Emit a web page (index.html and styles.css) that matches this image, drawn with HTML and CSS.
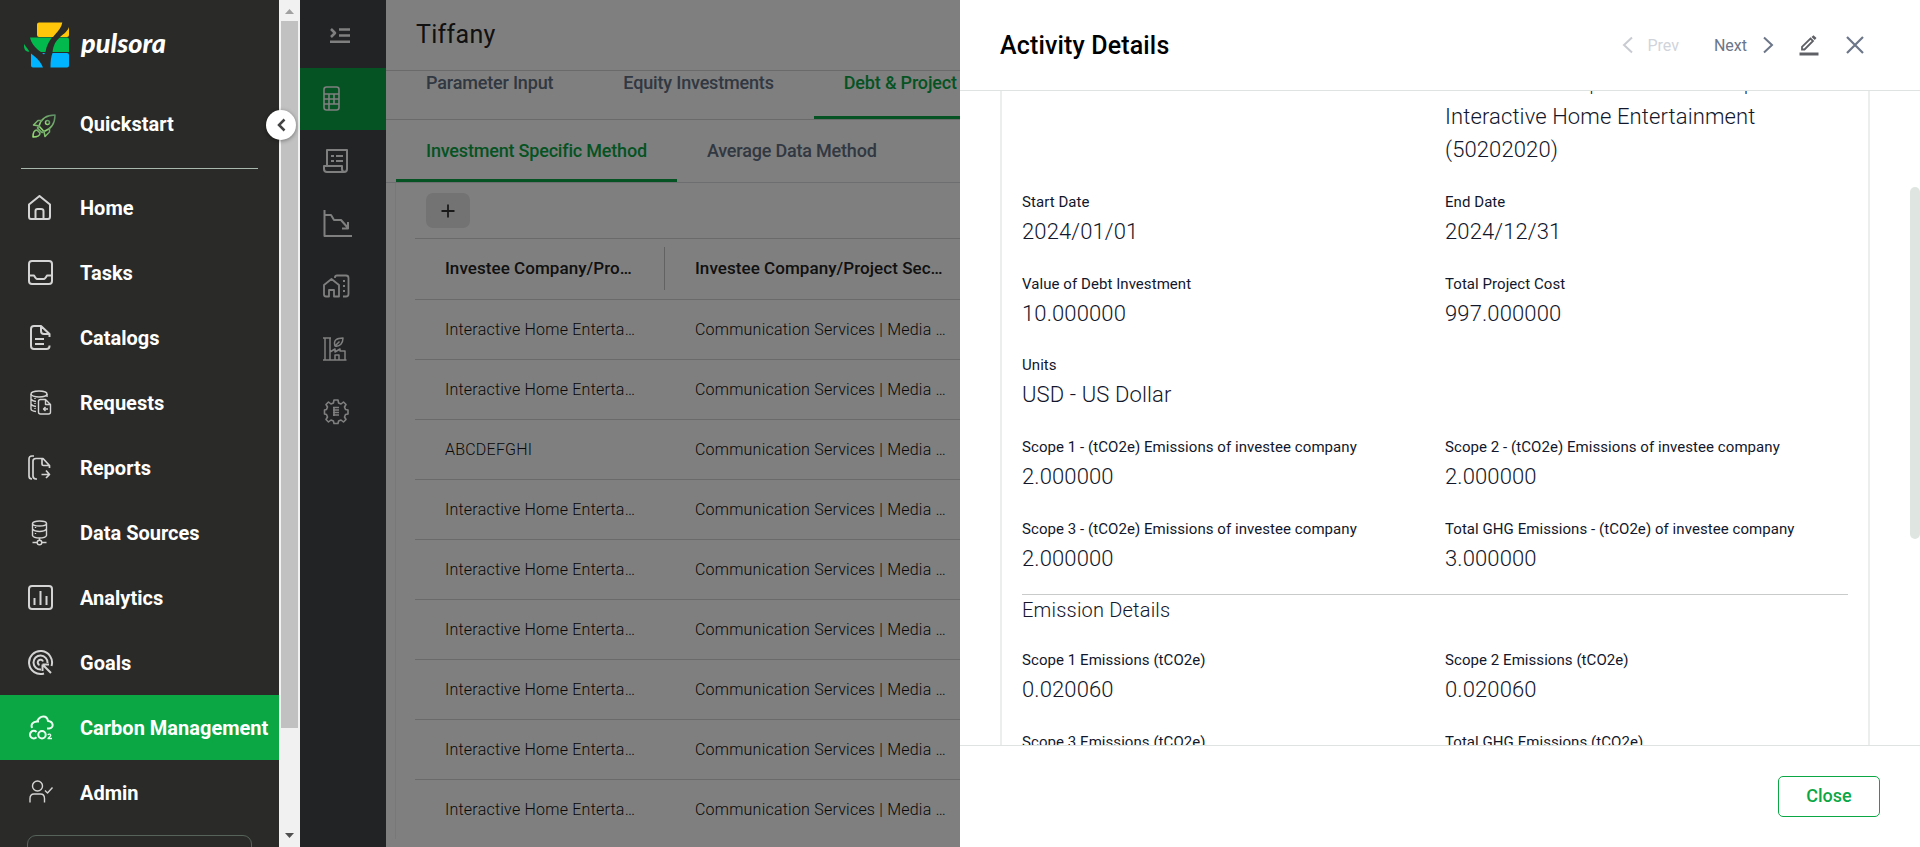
FILE: index.html
```html
<!DOCTYPE html>
<html lang="en">
<head>
<meta charset="utf-8">
<title>Pulsora - Activity Details</title>
<link rel="stylesheet" href="styles.css">
</head>
<body>
<div class="app">
  <nav class="sidebar">
    <div class="brand">
      <svg class="logo" width="46" height="46" viewBox="0 0 46 46">
        <path fill="#ffc60a" d="M15 0.500H38.300C37.500 5 35 8 31.500 12L29 15H15Q13 15 13 13V2.500Q13 .5 15 .5Z"/>
        <path fill="#ffc60a" d="M45 5V13Q45 15 43 15H36C41 11 43.500 9 45 5Z"/>
        <path fill="#02b94e" d="M6 15.500H28C24.500 20 22.500 24 21.500 30H17C12 27 7 21 6 15.500Z"/>
        <path fill="#02b94e" d="M36 15.500H43Q45 15.500 45 17.500V30H28.500C29.500 23 31.500 19 36 15.500Z"/>
        <path fill="#02b94e" d="M0 22L5.500 29.500Q1 30.500 0 25Z"/>
        <path fill="#00b4ff" d="M7 31.500C12 35 17 40 19 45.500H9Q7 45.500 7 43.500ZM18 31H21L20 32.500ZM28.500 31H43Q45 31 45 33V43.500Q45 45.500 43 45.500H26.500C26.500 39 27 35 28.500 31Z"/>
      </svg>
      <span class="wordmark">pulsora</span>
    </div>
    <a class="item quick">
      <svg class="rocket" width="24" height="24" viewBox="0 0 24 24" fill="none" stroke="url(#rg)" stroke-width="1.500" stroke-linejoin="round" stroke-linecap="round">
        <defs><linearGradient id="rg" x1="1" y1="0" x2="0" y2="1"><stop offset="0" stop-color="#5c8a66"/><stop offset="1" stop-color="#9ae673"/></linearGradient></defs>
        <path d="M7 12C9 5 15 1 23 1C23 9 19 15 12 17.500Z"/><path d="M10 6.500L6 6.500L1.500 11L7.500 12M17.500 14V18L13 22.500L12 17"/><circle cx="15.500" cy="8.500" r="2"/><path d="M7 12L5.500 14L10 18.500L12 17.500M5 16C2 16 1 19 1 23C5 23 8 22 8 19Z"/>
      </svg>
      <span>Quickstart</span>
    </a>
    <div class="rule"></div>
    <div class="items">
      <a class="item"><svg width="27" height="27" viewBox="0 0 27 27"><path d="M1 9.500L11.500 1L22 9.500V21.500Q22 24 20 24H3Q1 24 1 21.500ZM7.500 24V16Q7.500 14 9.500 14H13Q15.500 14 15.500 16V24"/></svg><span>Home</span></a>
      <a class="item"><svg width="27" height="27" viewBox="0 0 27 27"><rect x="1" y="1" width="23" height="23" rx="3"/><path d="M1 15.500H6Q8 19 9 19H16Q17 19 19 15.500H24"/></svg><span>Tasks</span></a>
      <a class="item"><svg width="27" height="27" viewBox="0 0 27 27"><path d="M21.500 20.500V21Q21.500 24 18.500 24H6Q3 24 3 21V4Q3 1 6 1H13L21.500 9V12M13 1V6Q13 9 16 9H21.500M7 14H16M7 19H16"/></svg><span>Catalogs</span></a>
      <a class="item"><svg class="thin" width="27" height="27" viewBox="0 0 27 27"><ellipse cx="11" cy="4" rx="8" ry="3"/><path d="M3 4V19Q3 21 8 21.500M19 4V7M3 9Q4 11 8 11.500M3 14Q4 16 8 16.500M7 8V9M7 13V14M7 18V19"/><path d="M12 9.500H17.500L22.500 14.500V22Q22.500 24 20.500 24H12.500Q10.500 24 10.500 22V11.500Q10.500 9.500 12.500 9.500M17.500 10V14.500H22M20 19H15.500M17.500 17L15.500 19L17.500 21"/></svg><span>Requests</span></a>
      <a class="item"><svg class="mid" width="27" height="27" viewBox="0 0 27 27"><path d="M6 1H4Q1 1 1 4V21Q1 24 4 24M9 24H8Q5 24 5 21V6Q5 3.500 8 3.500H15L21.500 10.500V13M14 4V9Q14 10.500 15.500 10.500H21.500M13.500 19.500H21.500M18 15.500L21.500 19.500L18 23"/></svg><span>Reports</span></a>
      <a class="item"><svg class="thin" width="27" height="27" viewBox="0 0 27 27"><ellipse cx="11.500" cy="3.500" rx="7" ry="2.500"/><path d="M4.500 3.500V15.500Q5.500 18 11.500 18T18.500 15.500V3.500M4.500 9Q6.500 11.500 11.500 11.500T18.500 9M11.500 18V20M4.500 22.500H9M14 22.500H18.500M7.500 7V8M7.500 13V14"/><circle cx="11.500" cy="22.500" r="2.300"/></svg><span>Data Sources</span></a>
      <a class="item"><svg width="27" height="27" viewBox="0 0 27 27"><rect x="1" y="1" width="23" height="23" rx="3"/><path d="M6.500 13V20M12.500 6V20M18.500 11V20"/></svg><span>Analytics</span></a>
      <a class="item"><svg width="27" height="27" viewBox="0 0 27 27"><path d="M16 23.500A11.500 11.500 0 1 1 23.500 16M13 19.500A7 7 0 1 1 19.500 13M11.500 15A2.700 2.700 0 1 1 15 11.500M14.500 14.500H21M14.500 14.500V21M15 15L23 23"/></svg><span>Goals</span></a>
      <a class="item active"><svg width="27" height="27" viewBox="0 0 27 27"><path d="M4 13C2.500 9 5 7 9 6.500C12 0 19 0 20 6C25.500 6.500 26.500 13 21 13.500H19M9 6.500H11"/><path d="M8.500 17A3.800 3.800 0 1 0 8.500 22.300"/><circle cx="14" cy="19.700" r="3.700"/><path class="sub" d="M19.800 20Q20.500 18.800 22 19.200Q23.500 20 22 21.500L20 23.500H24"/></svg><span>Carbon Management</span></a>
      <a class="item"><svg class="thin" width="27" height="27" viewBox="0 0 27 27"><circle cx="9.500" cy="6" r="5"/><path d="M2 22.500V18.500Q2 14 6 14H12.500Q16.500 14 16.500 18.500V22.500M17 10.500L19.500 13L24.500 7.500"/></svg><span>Admin</span></a>
    </div>
    <div class="footbox"></div>
  </nav>

  <div class="scroller">
    <svg width="21" height="21" viewBox="0 0 21 21"><path fill="#a0a0a0" d="M6 14L10.500 9L15 14Z"/></svg>
    <div class="thumb"></div>
    <svg class="down" width="21" height="21" viewBox="0 0 21 21"><path fill="#505050" d="M6 7L10.500 12L15 7Z"/></svg>
    <div class="collapse"><svg width="30" height="30" viewBox="0 0 30 30"><path fill="none" stroke="#444" stroke-width="2.500" d="M18.500 9.500L13 15L18.500 20.500"/></svg></div>
  </div>

  <div class="stage">
    <aside class="rail">
      <div class="cell first"><svg width="22" height="18" viewBox="0 0 22 18"><path d="M1 2L5 6L1 10M9 2.500H20M9 8.500H20M0 14.700H20" stroke-width="2.500"/></svg></div>
      <div class="cell on"><svg width="30" height="28" viewBox="0 0 30 28"><rect x="1" y="2" width="15" height="23" rx="2.500"/><path d="M1 9H16M1 14H16M1 19H16M6 9V25M11 9V19"/></svg></div>
      <div class="cell"><svg width="30" height="28" viewBox="0 0 30 28" stroke-width="2"><path d="M4 18V3H24V22Q24 25 21 25H4Q1 25 1 22V19H19V22Q19 25 22 25M8 9H11M13 9H20M8 14H11M13 14H20"/></svg></div>
      <div class="cell"><svg width="30" height="28" viewBox="0 0 30 28" stroke-width="2"><path d="M1.500 0V26H29M2 5H8L11 10H18L25 18M25 12V18.500H19"/></svg></div>
      <div class="cell"><svg width="30" height="28" viewBox="0 0 30 28" stroke-width="1.800"><path d="M1 13L8.500 7L16 13V24.500H11V18H6V24.500H3Q1 24.500 1 22.500ZM12 6V5Q12 3.500 14 3.500H23Q25.500 3.500 25.500 6V22Q25.500 24.500 23 24.500H20M20 9H22M20 14H22M20 19H22"/></svg></div>
      <div class="cell"><svg width="30" height="28" viewBox="0 0 30 28" stroke-width="1.500"><path d="M0 25H23.500M0 3H8M2 3V25M7 3V25M7 17L12 14V17L17 14V16H22V25M12 25V20H16V25M12 11C10 5 14 3 20 3C20 8 17 12 12 11L16.500 6.500"/></svg></div>
      <div class="cell"><svg width="30" height="28" viewBox="0 0 30 28" stroke-width="1.600"><path d="M11 2H15L15.600 5L18 6L20.500 4L23 6.500L21.500 9L22.500 11.500L25 12V16L22.500 16.500L21.500 19L23 21.500L20.500 24L18 22L15.600 23L15 25.500H11L10.400 23L8 22L5.500 24L3 21.500L4.500 19L3.500 16.500L1.500 16V12L3.500 11.500L4.500 9L3 6.500L5.500 4L8 6L10.400 5Z"/><path d="M10 9.500H16M10 12H16M10 14.500H16M10 17H16M11 10V18"/></svg></div>
    </aside>
    <main class="main">
      <header class="title">Tiffany</header>
      <div class="tabs top">
        <span class="tab">Parameter Input</span><span class="tab">Equity Investments</span><span class="tab sel">Debt &amp; Project Finance</span>
      </div>
      <div class="tabs second">
        <span class="tab sel">Investment Specific Method</span><span class="tab">Average Data Method</span>
      </div>
      <section class="card">
        <div class="toolbar"><button class="add"><svg width="14" height="14" viewBox="0 0 14 14"><path d="M7 .5V13.500M.5 7H13.500" stroke="#333" stroke-width="1.800"/></svg></button></div>
        <div class="table">
          <div class="row head"><span>Investee Company/Pro…</span><i></i><span>Investee Company/Project Sec…</span></div>
          <div class="row"><span>Interactive Home Enterta…</span><span>Communication Services | Media …</span></div>
          <div class="row"><span>Interactive Home Enterta…</span><span>Communication Services | Media …</span></div>
          <div class="row"><span>ABCDEFGHI</span><span>Communication Services | Media …</span></div>
          <div class="row"><span>Interactive Home Enterta…</span><span>Communication Services | Media …</span></div>
          <div class="row"><span>Interactive Home Enterta…</span><span>Communication Services | Media …</span></div>
          <div class="row"><span>Interactive Home Enterta…</span><span>Communication Services | Media …</span></div>
          <div class="row"><span>Interactive Home Enterta…</span><span>Communication Services | Media …</span></div>
          <div class="row"><span>Interactive Home Enterta…</span><span>Communication Services | Media …</span></div>
          <div class="row last"><span>Interactive Home Enterta…</span><span>Communication Services | Media …</span></div>
        </div>
      </section>
    </main>
    <div class="backdrop"></div>
  </div>

  <section class="drawer">
    <header class="dhead">
      <h2>Activity Details</h2>
      <div class="nav prev"><svg width="12" height="18" viewBox="0 0 12 18"><path d="M10 1.500L2 9L10 16.500"/></svg><span>Prev</span></div>
      <div class="nav next"><span>Next</span><svg width="12" height="18" viewBox="0 0 12 18"><path d="M2 1.500L10 9L2 16.500"/></svg></div>
      <svg class="edit" width="20" height="21" viewBox="0 0 20 21"><path fill="#5f6066" d="M.5 17.500H19.500V20.500H.5Z"/><path fill="none" stroke="#5f6066" stroke-width="1.800" d="M3 14.500V11.800L11.500 3.500L14 6L5.500 14.500Z"/><path fill="#5f6066" d="M12.500 2L14.500 .3L17.500 3L15.700 5Z"/></svg>
      <svg class="close" width="18" height="18" viewBox="0 0 18 18"><path d="M1 1L17 17M17 1L1 17"/></svg>
    </header>
    <div class="dbody">
      <div class="dcard">
        <div class="grid lead"><div></div><p class="value">Communication Services | Media &amp; Entertainment | Entertainment | Interactive Home Entertainment (50202020)</p></div>
        <div class="grid fields">
          <div class="field"><label>Start Date</label><p class="value">2024/01/01</p></div>
          <div class="field"><label>End Date</label><p class="value">2024/12/31</p></div>
          <div class="field"><label>Value of Debt Investment</label><p class="value">10.000000</p></div>
          <div class="field"><label>Total Project Cost</label><p class="value">997.000000</p></div>
          <div class="field wide"><label>Units</label><p class="value">USD - US Dollar</p></div>
          <div class="field"><label>Scope 1 - (tCO2e) Emissions of investee company</label><p class="value">2.000000</p></div>
          <div class="field"><label>Scope 2 - (tCO2e) Emissions of investee company</label><p class="value">2.000000</p></div>
          <div class="field"><label>Scope 3 - (tCO2e) Emissions of investee company</label><p class="value">2.000000</p></div>
          <div class="field"><label>Total GHG Emissions - (tCO2e) of investee company</label><p class="value">3.000000</p></div>
        </div>
        <h3>Emission Details</h3>
        <div class="grid">
          <div class="field"><label>Scope 1 Emissions (tCO2e)</label><p class="value">0.020060</p></div>
          <div class="field"><label>Scope 2 Emissions (tCO2e)</label><p class="value">0.020060</p></div>
          <div class="field"><label>Scope 3 Emissions (tCO2e)</label></div>
          <div class="field"><label>Total GHG Emissions (tCO2e)</label></div>
        </div>
      </div>
      <div class="dthumb"></div>
    </div>
    <footer class="dfoot"><button class="btn">Close</button></footer>
  </section>
</div>
</body>
</html>
```
FILE: styles.css
```css
* { box-sizing: border-box; }
body { margin: 0; font-family: Roboto, "Liberation Sans", sans-serif; overflow: hidden; }
h2, h3, p { margin: 0; font-weight: 400; }
.app { display: flex; width: 1920px; height: 847px; overflow: hidden; }

.sidebar { width: 279px; background: #2a2a28; color: #fff; display: flex; flex-direction: column; flex: none; }
.brand { display: flex; height: 90px; padding: 22px 0 0 24px; flex: none; }
.wordmark { font: italic 900 27px/42px Lato, sans-serif; margin-left: 11px; letter-spacing: .05px; }
.item { display: flex; align-items: center; height: 65px; padding-left: 28px; font-size: 20px; font-weight: 700; white-space: nowrap; flex: none; }
.item svg { width: 27px; margin: 2px 25px 0 0; flex: none; fill: none; stroke: #d4d4d4; stroke-width: 2; stroke-linejoin: round; }
.item svg.thin { stroke-width: 1.400; }
.item svg.mid { stroke-width: 1.700; }
.item svg .sub { stroke-width: 1.300; }
.item.active svg { stroke: #eafff0; }
.quick { height: 68px; }
.item svg.rocket { width: 24px; margin: 4px 24px 0 4px; stroke: url(#rg); stroke-width: 1.500; }
.rule { height: 1px; margin: 10px 21px 6px; background: #a9b8ad; flex: none; }
.items { flex: none; }
.item.active { background: #0ba745; }
.footbox { margin: 10px 27px 0; height: 40px; border: 1px solid #56635a; border-radius: 9px; flex: none; }

.scroller { position: relative; width: 21px; background: #f1f1f1; flex: none; display: flex; flex-direction: column; z-index: 2; }
.thumb { height: 707px; margin: 0 2px; background: #c1c1c1; }
.scroller svg { display: block; flex: none; }
.scroller .down { margin-top: auto; }
.collapse { position: absolute; left: -13px; top: 110px; width: 30px; height: 30px; border-radius: 50%; background: #fff; box-shadow: 0 1px 4px rgba(0,0,0,.4); }

.stage { position: relative; width: 660px; display: flex; flex: none; }
.backdrop { position: absolute; inset: 0; background: rgba(0,0,0,.5); }
.rail { width: 86px; background: #44464a; flex: none; }
.cell { height: 62.600px; padding-left: 23px; display: flex; align-items: center; }
.cell svg { fill: none; stroke: #fff; stroke-linejoin: round; flex: none; }
.cell svg:not([stroke-width]) { stroke-width: 1.600; }
.cell.first { height: 68px; padding: 3px 0 0 30px; }
.cell.on { height: 62px; background: #0ba745; }

.main { width: 574px; background: #fff; overflow: hidden; flex: none; }
.title { height: 71px; border-bottom: 1px solid #d4d4d4; padding: 0 0 0 30px; font-size: 25px; line-height: 70px; color: #222; letter-spacing: .3px; }
.tabs { display: flex; white-space: nowrap; font-size: 18px; font-weight: 500; color: #637083; letter-spacing: -.17px; }
.tabs .sel { color: #0ba745; border-bottom: 3px solid #0ba745; }
.top { height: 49px; border-bottom: 1px solid #d4d4d4; padding-left: 10px; gap: 10px; }
.top .tab { line-height: 24px; padding: 0 30px; height: 48px; }
.second { height: 63px; border-bottom: 1px solid #d8dde0; padding-left: 10px; letter-spacing: -.19px; }
.second .tab { line-height: 62px; height: 62px; padding: 0 30px; }
.card { margin-left: 9px; border-left: 1px solid #f0f0f0; }
.toolbar { height: 55px; padding: 10px 0 0 30px; }
.add { width: 44px; height: 35px; padding: 0; border: 0; border-radius: 7px; background: #e6e6e6; display: flex; align-items: center; justify-content: center; }
.table { margin-left: 19px; border-top: 1px solid #d4d4d4; }
.row { display: flex; align-items: center; height: 60px; padding-left: 30px; border-bottom: 1px solid #d4d4d4; font-size: 16px; font-weight: 350; letter-spacing: .22px; color: #111; white-space: nowrap; }
.row.last { border-bottom: 0; height: 59px; }
.row span:first-child { width: 250px; flex: none; }
.row.head { height: 61px; padding-bottom: 2px; font-weight: 500; color: #222; font-size: 17px; letter-spacing: .06px; }
.row.head span:first-child { width: 219px; }
.head i { width: 1px; height: 43px; background: #c4c4c4; margin-right: 30px; }

.drawer { width: 960px; background: #fff; display: flex; flex-direction: column; flex: none; color: #12172b; }
.dhead { height: 91px; border-bottom: 1px solid #dfe3e1; display: flex; align-items: center; padding: 0 56px 0 40px; flex: none; }
.dhead h2 { font-size: 25px; font-weight: 500; color: #000; flex: 1; letter-spacing: .15px; }
.nav { display: flex; align-items: center; font-size: 16px; color: #6b7688; }
.nav svg, .close { fill: none; stroke: #6b7688; stroke-width: 2; }
.nav.prev { color: #d0d4da; gap: 13px; margin-right: 35px; }
.nav.prev svg { stroke: #c8ccd2; }
.nav.next { gap: 15px; margin-right: 25px; }
.edit { margin-right: 27px; }
.close { stroke-width: 2.200; }
.dbody { position: relative; height: 654px; overflow: hidden; flex: none; }
.dcard { margin: -57px 50px 0 40px; border: solid #ebeeec; border-width: 0 2px; padding: 0 20px; height: 800px; }
.grid { display: grid; grid-template-columns: 423px 403px; }
.lead { height: 158px; }
.fields { margin-bottom: -6px; }
.field { height: 81.700px; }
.field.wide { grid-column: span 2; }
.field label { display: block; font-size: 15px; line-height: 21px; letter-spacing: .06px; }
.value { font-size: 22px; line-height: 33px; font-weight: 350; letter-spacing: .12px; }
.field .value { margin-top: 2px; }
h3 { border-top: 1px solid #c8cbca; font-size: 20px; line-height: 31px; font-weight: 350; height: 56px; letter-spacing: .2px; }
.dthumb { position: absolute; right: 0; top: 96px; width: 10px; height: 352px; border-radius: 5px; background: #dfe6e1; }
.dfoot { flex: 1; border-top: 1px solid #dfe3e1; display: flex; justify-content: flex-end; padding: 30px 40px 0 0; }
.btn { width: 102px; height: 41px; border: 1px solid #0ba745; border-radius: 5px; background: #fff; color: #0ba745; font: 500 18px Roboto, sans-serif; padding: 0 0 2px; }
```
